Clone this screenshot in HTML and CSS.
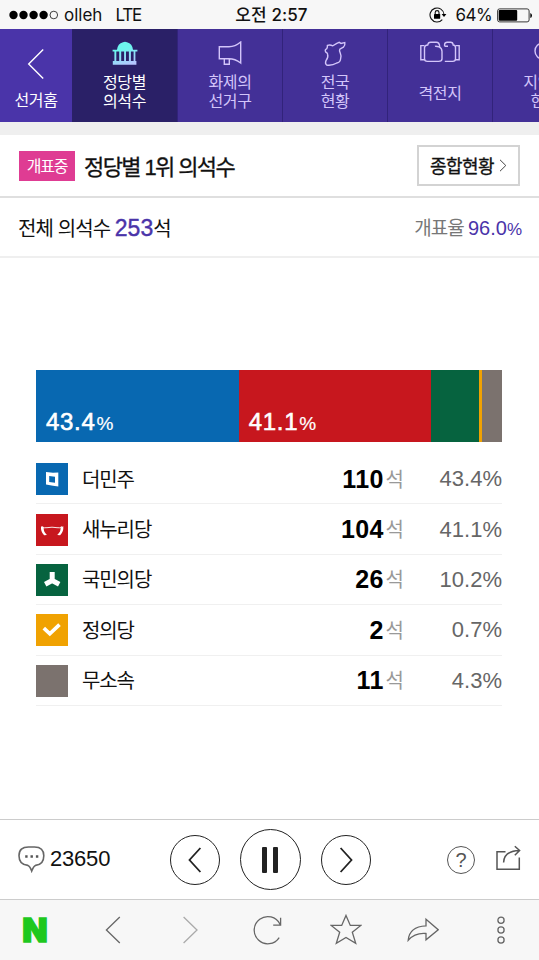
FILE: index.html
```html
<!DOCTYPE html>
<html lang="ko">
  <head>
    <meta charset="UTF-8" />
    <meta name="viewport" content="width=device-width, initial-scale=1.0" />
    <title>정당별 의석수</title>
    <link rel="stylesheet" href="styles.css" />
  </head>
  <body>
    <div class="status-bar">
      <div class="carrier">
        <svg width="50" height="10" viewBox="0 0 50 10">
          <circle cx="4.5" cy="5" r="4.2" />
          <circle cx="14.5" cy="5" r="4.2" />
          <circle cx="24.6" cy="5" r="4.2" />
          <circle cx="34.6" cy="5" r="4.2" />
          <circle cx="44.8" cy="5" r="3.8" fill="none" stroke="#111" stroke-width="0.8" />
        </svg>
        <span class="operator">olleh</span>
        <span class="network">LTE</span>
      </div>
      <div class="clock">오전 2:57</div>
      <div class="battery">
        <svg width="18" height="16" viewBox="0 0 18 16">
          <path d="M13.3 12.6A7 7 0 1 1 15 7.5" fill="none" stroke="#111" stroke-width="1.1" />
          <path d="M12.6 7h4.8L15 10z" />
          <rect x="5" y="7" width="6.2" height="4.8" rx="0.5" />
          <path d="M6.2 7V5.5a1.9 1.9 0 0 1 3.8 0V7" fill="none" stroke="#111" stroke-width="1.1" />
        </svg>
        <span class="percent">64%</span>
        <svg width="36" height="15" viewBox="0 0 36 15">
          <rect x="0.6" y="0.9" width="31.5" height="13" rx="2" fill="none" stroke="#222" stroke-width="0.9" />
          <rect x="1.7" y="2" width="18.5" height="10.8" rx="1" />
          <path d="M33.3 5v5q1.7-.5 1.7-2.5T33.3 5z" />
        </svg>
      </div>
    </div>

    <nav class="tabs">
      <a class="tab home">
        <svg width="18" height="32" viewBox="0 0 18 32"><path d="M16.2 1.5L1.7 16l14.5 14.5" /></svg>
        <span>선거홈</span>
      </a>
      <a class="tab active">
        <svg width="26" height="25" viewBox="0 0 26 25">
          <defs>
            <linearGradient id="dome" gradientUnits="userSpaceOnUse" x1="8" y1="0" x2="16" y2="24">
              <stop offset="0.35" stop-color="#6df5ee" />
              <stop offset="1" stop-color="#b5c5ff" />
            </linearGradient>
          </defs>
          <path fill="url(#dome)" d="M5 8.8Q5.6 2.6 11 1.2 13 .2 15 1.2 20.4 2.6 21 8.8h4.4v1.6h-2V20h1v3.8H.8V20h1.6v-9.6H.6V8.8zM4.3 10.4V20h2.9v-9.6zM9.2 10.4V20h2.9v-9.6zM14 10.4V20h2.9v-9.6zM18.9 10.4V20h2.7v-9.6z" fill-rule="evenodd" />
        </svg>
        <span>정당별<br />의석수</span>
      </a>
      <a class="tab">
        <svg width="26" height="26" viewBox="0 0 26 26">
          <path d="M2.3 5.7H12Q18 5.7 23.7 1v21Q18 17.7 12 17.7H2.3zM7.3 17.7v5.6h5v-5.6" />
        </svg>
        <span>화제의<br />선거구</span>
      </a>
      <a class="tab">
        <svg width="24" height="26" viewBox="0 0 24 26">
          <path d="M4.4 4.4q2.6-1 5.4.4l4-2.4 2.4-1 1.8 1 3.8-.8q.6 2.8-1.4 4.6l-3.6 2q-.8 1.6.4 3.6 1.4 3.4.4 6-.2 3.6-3.8 4.2-4.8 2.8-10.2 2-1.8-1.2-.6-4.4 2.6-3.4 1.6-6.4-.2-1.4-1.6-1.8l-.8-1.6q-.2-1.4 1.6-2.2.8-1.4.6-3.2z" />
        </svg>
        <span>전국<br />현황</span>
      </a>
      <a class="tab single">
        <svg width="40" height="24" viewBox="0 0 40 24">
          <path d="M4.5 4.6H.8V18.8h3.7M35.5 4.6h3.7v14.2h-3.7" />
          <path d="M15 5.4Q16 4.9 19 5.8q3 1 3 4.6v7.4q0 2.6-3.4 2.6H7.4q-2.9 0-2.9-2.6V6.6q.2-2.3 3.2-2.6.4-2.8 3-2.8h5.6q3.2 0 3.4 4.6" />
          <path d="M24.6 5.2H28M24.6 5.2V3.4q.2-2.2 2.6-2.2h3.4q2.4 0 2.6 2.8 2.3.2 2.3 2.6v11.2q0 2.6-2.8 2.6h-7.9" />
        </svg>
        <span>격전지</span>
      </a>
      <a class="tab last">
        <svg width="26" height="26" viewBox="0 0 26 26">
          <circle cx="10" cy="10" r="8" />
          <path d="M16 16l8 8" />
        </svg>
        <span>지역<br />현</span>
      </a>
    </nav>

    <header class="title-row">
      <span class="badge">개표중</span>
      <h1>정당별 1위 의석수</h1>
      <a class="summary">
        <span>종합현황</span>
        <svg width="8" height="13" viewBox="0 0 8 13"><path d="M1 .8l5.8 5.7L1 12.2" /></svg>
      </a>
    </header>

    <div class="total-row">
      <div class="total">전체 의석수 <strong>253</strong>석</div>
      <div class="rate">개표율 <span class="rate-num">96.0<small>%</small></span></div>
    </div>

    <main class="result">
      <div class="bar">
        <div class="seg minju" style="width: 43.5%">43.4<small>%</small></div>
        <div class="seg saenuri" style="width: 41.2%">41.1<small>%</small></div>
        <div class="seg gukmin" style="width: 10.35%"></div>
        <div class="seg jeongui" style="width: 0.6%"></div>
        <div class="seg none" style="width: 4.35%"></div>
      </div>
      <ul class="party-list">
        <li>
          <span class="logo minju">
            <svg width="32" height="32" viewBox="0 0 32 32">
              <path fill="#fff" fill-rule="evenodd" d="M10 9l7 .8 5.3-.2v14L17 22.8 10 21.4zM13.2 13v5.9l5.8.8v-6z" />
            </svg>
          </span>
          <span class="name">더민주</span>
          <span class="seats">110</span><span class="unit">석</span>
          <span class="share">43.4%</span>
        </li>
        <li>
          <span class="logo saenuri">
            <svg width="32" height="32" viewBox="0 0 32 32">
              <path fill="none" stroke="#fff" stroke-width="0.9" d="M6 12.6Q8 14.4 11 13.7q5-1 10 0 3 .7 5-1.1" />
              <path fill="#fff" d="M5 12.2q2 1 2.7 1.4-.2 4.7 3.2 7.3l-2.8.3Q4.5 17.8 5 12.2zM27.3 12.2q-2 1-2.7 1.4.2 4.7-3.4 7.3l2.9.3q3.7-3.4 3.2-9z" />
            </svg>
          </span>
          <span class="name">새누리당</span>
          <span class="seats">104</span><span class="unit">석</span>
          <span class="share">41.1%</span>
        </li>
        <li>
          <span class="logo gukmin">
            <svg width="32" height="32" viewBox="0 0 32 32">
              <path fill="none" stroke="#fff" stroke-width="5" d="M16.2 8v8.5L9.2 20.3M16.2 16.5l7 3.8" />
            </svg>
          </span>
          <span class="name">국민의당</span>
          <span class="seats">26</span><span class="unit">석</span>
          <span class="share">10.2%</span>
        </li>
        <li>
          <span class="logo jeongui">
            <svg width="32" height="32" viewBox="0 0 32 32">
              <path fill="none" stroke="#fff" stroke-width="3.7" d="M7.8 14.2l6 5.6 9.7-9.2" />
            </svg>
          </span>
          <span class="name">정의당</span>
          <span class="seats">2</span><span class="unit">석</span>
          <span class="share">0.7%</span>
        </li>
        <li>
          <span class="logo none"></span>
          <span class="name">무소속</span>
          <span class="seats">11</span><span class="unit">석</span>
          <span class="share">4.3%</span>
        </li>
      </ul>
    </main>

    <div class="player">
      <a class="comments">
        <svg width="27" height="27" viewBox="0 0 27 27">
          <path d="M10.5 1h6q9.3 0 9.3 8.8 0 9-8.3 9.6-2 .8-3.8 5.6-1.7-4.8-3.8-5.6Q1 18.8 1 9.8 1 1 10.5 1z" />
          <path class="dots" d="M7.2 9.3h2.4v2.4H7.2zM12.5 9.3h2.4v2.4h-2.4zM17.9 9.3h2.4v2.4h-2.4z" />
        </svg>
        <span>23650</span>
      </a>
      <div class="controls">
        <button class="round">
          <svg width="14" height="26" viewBox="0 0 14 26"><path d="M12.4 1L1.5 13l10.9 12" /></svg>
        </button>
        <button class="round pause">
          <svg width="18" height="26" viewBox="0 0 18 26">
            <rect x="1" y="0" width="5" height="26" rx="1" />
            <rect x="12" y="0" width="5" height="26" rx="1" />
          </svg>
        </button>
        <button class="round">
          <svg width="14" height="26" viewBox="0 0 14 26"><path d="M1.6 1l10.9 12L1.6 25" /></svg>
        </button>
      </div>
      <div class="tools">
        <span class="help">?</span>
        <svg width="25" height="26" viewBox="0 0 25 26">
          <path d="M9.5 6.8H1v17.4h22.3V12.5M7.6 17.5Q8 6 23.5 5.5M18.8 1.2l4.8 4.3-4.8 4.8" />
        </svg>
      </div>
    </div>

    <div class="browser-bar">
      <span class="naver">N</span>
      <svg width="32" height="32" viewBox="0 0 32 32"><path d="M22.8 3L9.4 16l13.4 13" /></svg>
      <svg class="disabled" width="32" height="32" viewBox="0 0 32 32"><path d="M9.6 3L23 16 9.6 29" /></svg>
      <svg width="32" height="32" viewBox="0 0 32 32">
        <path d="M28 10.2A13.6 13.6 0 1 0 27.2 23.6M28.6 3.8v7.3h-7.4" />
      </svg>
      <svg width="32" height="32" viewBox="0 0 32 32">
        <path d="M16 1.4l4.3 10h10.5l-8.5 6.9 3.4 11L16 23.4l-9.7 5.9 3.4-11L1.2 11.4h10.5z" />
      </svg>
      <svg width="32" height="32" viewBox="0 0 32 32">
        <path d="M19 5.2l12.2 10.5L19 25.8v-6.3Q8 18.5 1.2 26.3 2.3 12.5 19 11.8z" />
      </svg>
      <svg width="32" height="32" viewBox="0 0 32 32">
        <circle cx="16" cy="6.2" r="3.1" />
        <circle cx="16" cy="16" r="3.1" />
        <circle cx="16" cy="26" r="3.1" />
      </svg>
    </div>
  </body>
</html>
```
FILE: styles.css
```css
* {
  box-sizing: border-box;
}
body {
  margin: 0;
  height: 960px;
  display: flex;
  flex-direction: column;
  overflow: hidden;
  background: #fff;
  color: #111;
  font-family: "Liberation Sans", "Noto Sans CJK KR", sans-serif;
}
svg {
  display: block;
  flex: none;
}

/* status bar */
.status-bar {
  height: 29px;
  flex: none;
  display: grid;
  grid-template-columns: 1fr auto 1fr;
  align-items: center;
  padding: 0 6px 0 9px;
  background: #f7f7f7;
  font-family: Inter, "Noto Sans CJK KR", sans-serif;
  font-size: 17px;
  line-height: 29px;
}
.status-bar span,
.clock {
  padding-top: 1px;
}
.carrier,
.battery {
  display: flex;
  align-items: center;
}
.battery {
  justify-content: flex-end;
}
.operator {
  margin: 0 13px 0 5px;
}
.network {
  letter-spacing: -1.2px;
}
.clock {
  padding-left: 1px;
  font-weight: 500;
  letter-spacing: 0.1px;
}
.percent {
  margin: 0 5px 0 9px;
  letter-spacing: -0.6px;
}

/* tabs */
.tabs {
  height: 93px;
  flex: none;
  display: flex;
  overflow: hidden;
  background: #433097;
}
.tab {
  width: 105px;
  flex: none;
  display: flex;
  flex-direction: column;
  align-items: center;
  padding-top: 12px;
  border-left: 1px solid #32237b;
  color: #d3c5fa;
  font-size: 16px;
  line-height: 19px;
  letter-spacing: -0.4px;
  text-align: center;
}
.tab svg {
  fill: none;
  stroke: #d3c5fa;
  stroke-width: 1.4;
}
.tab span {
  margin-top: 6px;
}
.tab.home {
  width: 72px;
  padding-top: 19px;
  border: 0;
  background: #4a34a9;
  color: #fff;
}
.tab.home svg {
  stroke: #fff;
}
.tab.home span {
  margin-top: 11px;
}
.tab.active {
  border: 0;
  background: #2a2067;
  color: #fff;
}
.tab.active svg {
  stroke: none;
}
.tab.active span {
  margin-top: 7px;
}
.tab.single span {
  margin-top: 19px;
}
.tab.last {
  width: 47px;
  align-items: flex-end;
}
.tab.last svg {
  margin-right: -20px;
}
.tab.last span {
  margin-right: -13px;
}

/* title */
.title-row {
  height: 76px;
  flex: none;
  display: flex;
  align-items: center;
  padding: 0 19px;
  border-top: 13px solid #efefef;
  border-bottom: 2px solid #dfdfdf;
}
.badge {
  width: 56px;
  height: 30px;
  background: #df3c93;
  color: #fff;
  font-size: 16px;
  line-height: 32px;
  letter-spacing: -1.2px;
  text-align: center;
}
h1 {
  margin: 0 0 2px 9px;
  font-size: 22px;
  font-weight: normal;
  letter-spacing: -1.6px;
  -webkit-text-stroke: 0.3px #111;
}
.summary {
  width: 103px;
  height: 41px;
  margin-left: auto;
  display: flex;
  align-items: center;
  justify-content: center;
  gap: 5px;
  border: 2px solid #d3d3d3;
  font-size: 18px;
  letter-spacing: -0.6px;
  -webkit-text-stroke: 0.3px #111;
}
.summary span {
  margin-bottom: 2px;
}
.summary svg {
  fill: none;
  stroke: #444;
}
.total-row {
  height: 60px;
  flex: none;
  display: flex;
  align-items: center;
  justify-content: space-between;
  padding: 0 17px 0 18px;
  border-bottom: 2px solid #efefef;
}
.total {
  font-size: 20px;
  letter-spacing: -0.9px;
}
.total strong {
  color: #4a34a9;
  font-size: 23px;
  font-weight: normal;
  letter-spacing: 0;
  -webkit-text-stroke: 0.4px #4a34a9;
}
.rate {
  padding-bottom: 2px;
  color: #777;
  font-size: 19px;
  letter-spacing: -1px;
}
.rate-num {
  color: #4a34a9;
  font-size: 20px;
  letter-spacing: 0;
}
.rate small {
  font-size: 17px;
}

/* result */
.result {
  flex: 1;
  padding: 112px 37px 0 36px;
}
.bar {
  display: flex;
  height: 72px;
}
.seg {
  padding: 38px 0 0 10px;
  color: #fff;
  font-size: 24px;
  line-height: 28px;
  letter-spacing: 0.7px;
  -webkit-text-stroke: 0.6px #fff;
}
.seg:nth-child(n + 3) {
  padding: 0;
}
.seg small {
  margin-left: 1px;
  font-size: 19px;
  -webkit-text-stroke: 0.2px #fff;
}
.minju {
  background: #0868b1;
}
.saenuri {
  background: #c7171e;
}
.gukmin {
  background: #06633f;
}
.jeongui {
  background: #f0a202;
}
.none {
  background: #7b726e;
}
.party-list {
  margin: 12px 0 0;
  padding: 0;
  list-style: none;
}
.party-list li {
  height: 50.4px;
  display: flex;
  align-items: center;
  padding-top: 1px;
  border-bottom: 1px solid #f0f0f0;
}
.logo {
  width: 32px;
  height: 32px;
}
.name {
  margin: 0 0 2px 14px;
  font-size: 20px;
  letter-spacing: -1.1px;
}
.seats {
  margin-left: auto;
  color: #000;
  font-size: 25px;
  font-weight: bold;
  letter-spacing: 0.3px;
}
.unit {
  margin: 0 0 2px 2px;
  color: #999;
  font-size: 20px;
}
.share {
  width: 98px;
  color: #666;
  font-size: 22px;
  text-align: right;
}

/* player */
.player {
  height: 80px;
  flex: none;
  display: grid;
  grid-template-columns: 1fr auto 1fr;
  align-items: center;
  padding: 0 18px;
  border-top: 1px solid #ccc;
}
.comments {
  display: flex;
  align-items: center;
  gap: 5px;
  font-size: 22px;
  letter-spacing: -0.2px;
}
.comments span {
  margin-bottom: 2px;
}
.comments svg {
  fill: none;
  stroke: #666;
  stroke-width: 1.6;
}
.comments .dots {
  fill: #555;
  stroke: none;
}
.controls {
  display: flex;
  align-items: center;
  gap: 20px;
  padding-left: 1px;
}
.round {
  width: 50px;
  height: 50px;
  padding: 0;
  display: flex;
  align-items: center;
  justify-content: center;
  border: 1.5px solid #222;
  border-radius: 50%;
  background: none;
}
.round svg {
  fill: none;
  stroke: #222;
  stroke-width: 1.8;
}
.round.pause {
  width: 61px;
  height: 61px;
}
.round.pause svg {
  fill: #222;
  stroke: none;
}
.tools {
  display: flex;
  align-items: center;
  justify-content: flex-end;
  gap: 21px;
}
.tools svg {
  margin-bottom: 3px;
  fill: none;
  stroke: #555;
  stroke-width: 1.5;
}
.help {
  width: 28px;
  height: 28px;
  border: 1.5px solid #555;
  border-radius: 50%;
  color: #555;
  font-size: 20px;
  line-height: 26px;
  text-align: center;
}

/* browser bar */
.browser-bar {
  height: 61px;
  flex: none;
  display: flex;
  align-items: center;
  justify-content: space-between;
  padding: 0 22px 0 19px;
  border-top: 1px solid #ccc;
  background: #f7f7f7;
}
.browser-bar svg {
  fill: none;
  stroke: #666;
  stroke-width: 1.3;
}
.browser-bar .disabled {
  stroke: #aaa;
}
.naver {
  width: 32px;
  color: #1ec81e;
  font-family: Inter, sans-serif;
  font-size: 33px;
  font-weight: 900;
  line-height: 32px;
  text-align: center;
  -webkit-text-stroke: 1.4px #1ec81e;
}
```
